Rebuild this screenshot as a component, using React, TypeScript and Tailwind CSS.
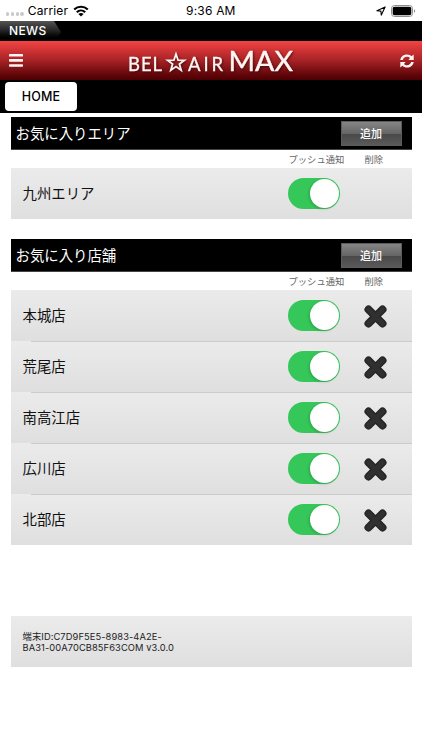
interface Shop {
  name: string;
  removable: boolean;
}

const AREAS: Shop[] = [{ name: '九州エリア', removable: false }];

const SHOPS: Shop[] = [
  { name: '本城店', removable: true },
  { name: '荒尾店', removable: true },
  { name: '南高江店', removable: true },
  { name: '広川店', removable: true },
  { name: '北部店', removable: true },
];

function StatusBar() {
  return (
    <div className="relative flex h-[21px] items-center justify-between bg-white pl-[6px] pr-[6px]">
      <div className="flex items-center">
        <div className="mt-[7px] flex gap-[1.4px]">
          {[0, 1, 2, 3].map((i) => (
            <span key={i} className="h-[3.4px] w-[3.4px] rounded-full bg-[#c9c9c9]" />
          ))}
        </div>
        <span className="ml-[4px] text-[12px] leading-none tracking-[0.15px]">Carrier</span>
        <svg className="ml-[5px]" width="16" height="12" viewBox="0 0 16 12" fill="none" stroke="#000" strokeWidth="2.2">
          <path d="M1.2 4.5C5 .8 11 .8 14.8 4.5" />
          <path d="M3.8 7.2C6.2 4.9 9.8 4.9 12.2 7.2" />
          <path d="M8 11.6L5.4 9C6.8 7.7 9.2 7.7 10.6 9Z" fill="#000" stroke="none" />
        </svg>
      </div>
      <span className="absolute left-[186px] top-[5px] text-[12px] leading-none tracking-[0.2px]">9:36 AM</span>
      <div className="flex items-center gap-[5px]">
        <svg width="10" height="10" viewBox="0 0 10 10" fill="none" stroke="#000" strokeWidth="1.1" strokeLinejoin="round">
          <path d="M9.1.9L.9 4.7L4.9 5.1L5.3 9.1Z" />
        </svg>
        <svg width="25" height="12" viewBox="0 0 25 12">
          <rect x=".5" y=".5" width="21" height="11" rx="3" fill="none" stroke="#8e8e8e" />
          <rect x="1.7" y="1.7" width="18.6" height="8.6" rx="1.8" />
          <path d="M23 4.2C24.6 4.7 24.6 7.3 23 7.8Z" fill="#8e8e8e" />
        </svg>
      </div>
    </div>
  );
}

function Logo() {
  return (
    <svg className="drop-shadow-[1px_1px_1px_rgba(40,0,0,0.6)]" width="170" height="38" viewBox="0 -4 170 38" fill="#fff6f4" fontFamily="Lato, sans-serif">
      <text x="1" y="24.5" fontSize="18.5" textLength="34" stroke="#fff6f4" strokeWidth=".3">BEL</text>
      <path
        d="M49 8L51.1 14.2L57.4 14.3L52.4 18.1L54.2 24.2L49 20.6L43.8 24.2L45.6 18.1L40.6 14.3L46.9 14.2Z"
        fill="none"
        stroke="#fff6f4"
        strokeWidth="1.8"
      />
      <text x="61" y="24.5" fontSize="18.5" textLength="35" stroke="#fff6f4" strokeWidth=".3">AIR</text>
      <text x="101.5" y="24.5" fontSize="27" textLength="64.5" lengthAdjust="spacingAndGlyphs" stroke="#fff6f4" strokeWidth=".4">MAX</text>
    </svg>
  );
}

function Header() {
  return (
    <header className="flex h-[39px] items-center justify-between bg-gradient-to-b from-[#f44343] via-[#a72225] to-[#4b0003] pl-[9px] pr-[8px]">
      <svg width="14" height="13" viewBox="0 0 14 13" fill="#fff4f2">
        <rect width="14" height="2.6" rx=".7" />
        <rect y="5.1" width="14" height="2.6" rx=".7" />
        <rect y="10.2" width="14" height="2.6" rx=".7" />
      </svg>
      <Logo />
      <svg width="14" height="14" viewBox="0 0 14 14" fill="#fff4f2">
        <path d="M.3 6C.8 2.5 3.5.4 7 .4C8.9.4 10.4 1.1 11.6 2.2L13.7.5V6H8.4L10 4.1C9.2 3.3 8.2 2.8 7 2.8C5 2.8 3.4 4 2.8 6Z" />
        <path d="M13.7 8C13.2 11.5 10.5 13.6 7 13.6C5.1 13.6 3.6 12.9 2.4 11.8L.3 13.5V8H5.6L4 9.9C4.8 10.7 5.8 11.2 7 11.2C9 11.2 10.6 10 11.2 8Z" />
      </svg>
    </header>
  );
}

function Toggle() {
  return (
    <div className="flex h-[31.5px] w-[52px] items-center justify-end rounded-full bg-[#35c759] pr-[1.5px]">
      <div className="h-[28.5px] w-[28.5px] rounded-full bg-white shadow-[-1px_1px_3px_rgba(0,0,0,0.18)]" />
    </div>
  );
}

function DeleteIcon() {
  return (
    <svg width="23" height="23" viewBox="0 0 23 23" fill="none" strokeLinecap="round">
      <path d="M4.5 4.5L18.5 18.5M18.5 4.5L4.5 18.5" stroke="#262626" strokeWidth="8" />
      <path d="M4.5 4.5L18.5 18.5M18.5 4.5L4.5 18.5" stroke="#303030" strokeWidth="5" />
    </svg>
  );
}

function Section({ title, items }: { title: string; items: Shop[] }) {
  return (
    <section>
      <div className="flex h-[33px] items-center justify-between border-b border-[#444] bg-black pl-[5px] pr-[10px]">
        <h2 className="pt-[2px] text-[14.4px] leading-none text-white">{title}</h2>
        <button className="h-[25px] w-[61px] border border-[#5c5c5c] bg-[linear-gradient(#858585,#666_50%,#484848_51%,#595959)] pt-[2px] text-[11px] font-medium leading-none text-white">
          追加
        </button>
      </div>
      <div className="flex h-[18px] items-center pt-[2px] text-[9.3px] leading-none text-[#666]">
        <span className="ml-[278px] w-[76px]">プッシュ通知</span>
        <span>削除</span>
      </div>
      {items.map((item, i) => (
        <div key={item.name} className="relative flex h-[51px] items-center bg-gradient-to-b from-[#ebebeb] to-[#dfdfdf] pl-[12px]">
          {i > 0 && <div className="absolute left-[20px] right-0 top-0 h-px bg-[#cbcbcb]" />}
          <span className="w-[265.5px] pt-[2px] text-[14.4px] leading-none text-[#111]">{item.name}</span>
          <Toggle />
          {item.removable && (
            <button className="ml-[24px] mt-[1px]" aria-label="削除">
              <DeleteIcon />
            </button>
          )}
        </div>
      ))}
    </section>
  );
}

export default function App() {
  return (
    <div className="h-[750px] w-[422px] overflow-hidden bg-white font-['Inter','Noto_Sans_CJK_JP',sans-serif] text-black">
      <StatusBar />
      <div className="h-[20px] bg-black">
        <div className="h-[20px] w-[62px] bg-gradient-to-b from-[#555] via-[#222] to-black pl-[9px] pt-[3px] text-[12px] font-medium leading-[13px] tracking-[0.4px] text-white [clip-path:polygon(0_0,54px_0,61px_11px,56px_100%,0_100%)]">
          NEWS
        </div>
      </div>
      <Header />
      <nav className="flex h-[33px] bg-black pl-[5px] pt-[2px]">
        <button className="h-[29px] w-[72px] rounded-[4px] bg-white pt-px text-[12.5px] font-medium leading-none tracking-[0.2px]">HOME</button>
      </nav>
      <main className="ml-[10.5px] mt-[4px] flex w-[401px] flex-col gap-[20px]">
        <Section title="お気に入りエリア" items={AREAS} />
        <Section title="お気に入り店舗" items={SHOPS} />
      </main>
      <footer className="ml-[10.5px] mt-[71px] flex h-[51px] w-[401px] items-center bg-gradient-to-b from-[#ebebeb] to-[#dfdfdf] pl-[12px]">
        <p className="text-[9.3px] leading-[11px] tracking-[0.1px] text-[#222]">
          端末ID:C7D9F5E5-8983-4A2E-
          <br />
          BA31-00A70CB85F63COM v3.0.0
        </p>
      </footer>
    </div>
  );
}
